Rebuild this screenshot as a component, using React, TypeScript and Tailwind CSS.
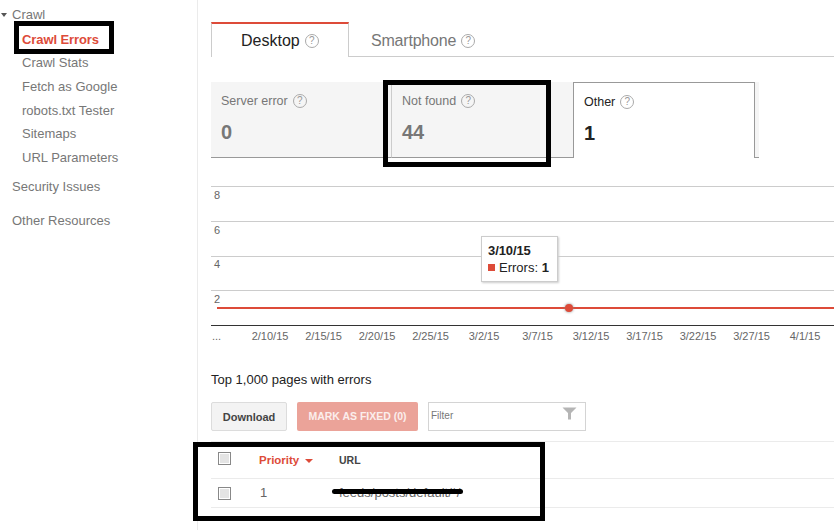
const crawlLinks = ["Crawl Stats", "Fetch as Google", "robots.txt Tester", "Sitemaps", "URL Parameters"]
const gridLabels = [
  { label: "8", rowClass: "h-[35px] pt-[2px]" },
  { label: "6", rowClass: "h-[35px] pt-[2px]" },
  { label: "4", rowClass: "h-[34px] pt-[1px]" },
  { label: "2", rowClass: "h-[35px] pt-[2px]" },
]
const dates = ["2/10/15", "2/15/15", "2/20/15", "2/25/15", "3/2/15", "3/7/15", "3/12/15", "3/17/15", "3/22/15", "3/27/15", "4/1/15"]

function Help() {
  return (
    <span className="ml-[5px] inline-flex h-[14px] w-[14px] items-center justify-center rounded-full border border-[#aaa] text-[10px] leading-none font-normal tracking-normal text-[#999]">?</span>
  )
}

function Sidebar() {
  return (
    <div className="h-full w-[198px] shrink-0 border-r border-[#ebebeb] pt-[8px] text-[13px] leading-[14px] text-[#777]">
      <div className="relative pl-[12px]">
        <span className="absolute top-[5px] left-[1px] h-0 w-0 border-x-[3px] border-t-[4px] border-x-transparent border-t-[#555]"></span>
        Crawl
      </div>
      <div className="mt-[11px] pl-[22px] font-bold tracking-[-0.1px] text-[#dd4b39]">Crawl Errors</div>
      <div className="mt-[9.4px] flex flex-col gap-[9.6px] pl-[22px]">
        {crawlLinks.map((l) => <div key={l}>{l}</div>)}
      </div>
      <div className="mt-[15.6px] pl-[12px]">Security Issues</div>
      <div className="mt-[20px] pl-[12px]">Other Resources</div>
    </div>
  )
}

function Tabs() {
  return (
    <div className="flex h-[35px] text-[16px]">
      <div className="flex w-[138px] items-center border-x border-t-2 border-x-[#ccc] border-t-[#dd4b39] pl-[29px] text-[#222]">
        Desktop<Help />
      </div>
      <div className="flex flex-1 items-center border-b border-[#ccc] pt-[3px] pl-[22px] tracking-[-0.2px] text-[#777]">
        Smartphone<Help />
      </div>
    </div>
  )
}

function Cards() {
  return (
    <div className="mt-[25px] flex h-[76px] text-[12.5px]">
      <div className="w-[180px] border-b border-[#999] bg-[#f5f5f5] pt-[10px] pl-[10px] text-[#777]">
        <div className="flex items-center">Server error<Help /></div>
        <div className="mt-[9px] text-[20px] leading-[24px] font-bold">0</div>
      </div>
      <div className="w-[182px] border-b border-l border-b-[#999] border-l-[#ccc] bg-[#f5f5f5] pt-[10px] pl-[10px] text-[#777]">
        <div className="flex items-center">Not found<Help /></div>
        <div className="mt-[9px] text-[20px] leading-[24px] font-bold">44</div>
      </div>
      <div className="w-[182px] border-x border-t border-[#999] bg-white pt-[10px] pl-[10px] text-[#222]">
        <div className="flex items-center">Other<Help /></div>
        <div className="mt-[9px] text-[20px] leading-[24px] font-bold">1</div>
      </div>
      <div className="w-[4px] border-b border-[#999] bg-[#f5f5f5]"></div>
    </div>
  )
}

function Chart() {
  return (
    <div className="relative mt-[28px]">
      {gridLabels.map((g) => (
        <div key={g.label} className={`${g.rowClass} border-t border-[#ccc] pl-[3px] text-[11px] leading-[12px] text-[#666]`}>{g.label}</div>
      ))}
      <div className="border-t border-[#333]"></div>
      <div className="flex h-[20px] items-center text-[11px] text-[#666]">
        <div className="w-[32.3px] pl-[1px]">...</div>
        {dates.map((d) => <div key={d} className="w-[53.5px] shrink-0 text-center">{d}</div>)}
      </div>
      {/* data series + hover */}
      <div className="absolute top-[121px] right-0 left-[6px] h-[2px] bg-[#dd4b39]"></div>
      <div className="absolute top-[118px] left-[354px] h-[8px] w-[8px] rounded-full bg-[#dd4b39] shadow-[0_0_3px_#888]"></div>
      <div className="absolute top-[50px] left-[270px] h-[46px] w-[77px] border border-[#ccc] bg-white pt-[5px] pl-[6px] text-[13px] leading-[17px] text-[#222] shadow-[1px_1px_2px_#ccc]">
        <div className="font-bold tracking-[-0.1px]">3/10/15</div>
        <div className="flex items-center">
          <span className="mr-[4px] h-[7px] w-[7px] bg-[#dd4b39]"></span>
          Errors:&nbsp;<b>1</b>
        </div>
      </div>
    </div>
  )
}

function Checkbox() {
  return <span className="block h-[13px] w-[13px] border border-[#888] bg-[#e4e4e4] shadow-[inset_0_0_0_1px_#fff]"></span>
}

function Toolbar() {
  return (
    <div className="mt-[15px] flex h-[29px] gap-[10px] text-[11px] font-bold">
      <div className="flex w-[76px] items-center justify-center rounded-[2px] border border-[#dcdcdc] bg-[#f3f3f3] pt-[1px] text-[#444]">Download</div>
      <div className="flex w-[121px] items-center justify-center rounded-[2px] bg-[#eba399] pt-[1px] text-[10.5px] text-[#fbeeec]">MARK AS FIXED (0)</div>
      <div className="flex w-[158px] justify-between border border-[#d4d4d4] pt-[6px] pr-[8px] pl-[2px] font-normal text-[#777]">
        <span className="text-[10px] leading-[14px]">Filter</span>
        <svg width="15" height="13" viewBox="0 0 15 13" className="mt-[-2px]">
          <path d="M0.5 0.5H14.5L9 6V12.5H6V6Z" fill="#b5b5b5" />
        </svg>
      </div>
    </div>
  )
}

function Table() {
  return (
    <div className="relative mt-[10px] text-[11px]">
      <div className="flex h-[37px] border-t border-[#ebebeb]">
        <div className="w-[48px] pt-[10px] pl-[7px]"><Checkbox /></div>
        <div className="flex w-[80px] items-center pt-[1px] text-[11.5px] font-bold text-[#dd4b39]">
          Priority
          <span className="ml-[6px] h-0 w-0 border-x-[4px] border-t-[4px] border-x-transparent border-t-[#dd4b39]"></span>
        </div>
        <div className="flex items-center pt-[1px] text-[10.5px] font-bold text-[#444]">URL</div>
      </div>
      <div className="flex h-[30px] border-y border-[#ebebeb] text-[13px] text-[#666]">
        <div className="w-[49px] pt-[8px] pl-[7px]"><Checkbox /></div>
        <div className="flex w-[79px] items-center">1</div>
        <div className="flex items-center">feeds/posts/default/*/</div>
      </div>
      {/* scribble over the url */}
      <div className="absolute top-[48px] left-[121px] h-[5px] w-[131px] rounded-full bg-black"></div>
    </div>
  )
}

export default function App() {
  return (
    <div className="relative flex h-[530px] w-[834px] overflow-hidden bg-white font-['Liberation_Sans',Arial,sans-serif]">
      <Sidebar />
      <div className="min-w-0 flex-1 pt-[22px] pl-[13px]">
        <Tabs />
        <Cards />
        <Chart />
        <div className="mt-[27px] text-[13px] leading-[14px] text-[#222]">Top 1,000 pages with errors</div>
        <Toolbar />
        <Table />
      </div>
      {/* annotation boxes drawn on the screenshot */}
      <div className="absolute top-[21px] left-[14px] h-[33px] w-[100px] border-[5px] border-black"></div>
      <div className="absolute top-[80px] left-[383px] h-[87px] w-[168px] border-[5px] border-black"></div>
      <div className="absolute top-[442px] left-[193px] h-[79px] w-[352px] border-[5px] border-black"></div>
    </div>
  )
}
